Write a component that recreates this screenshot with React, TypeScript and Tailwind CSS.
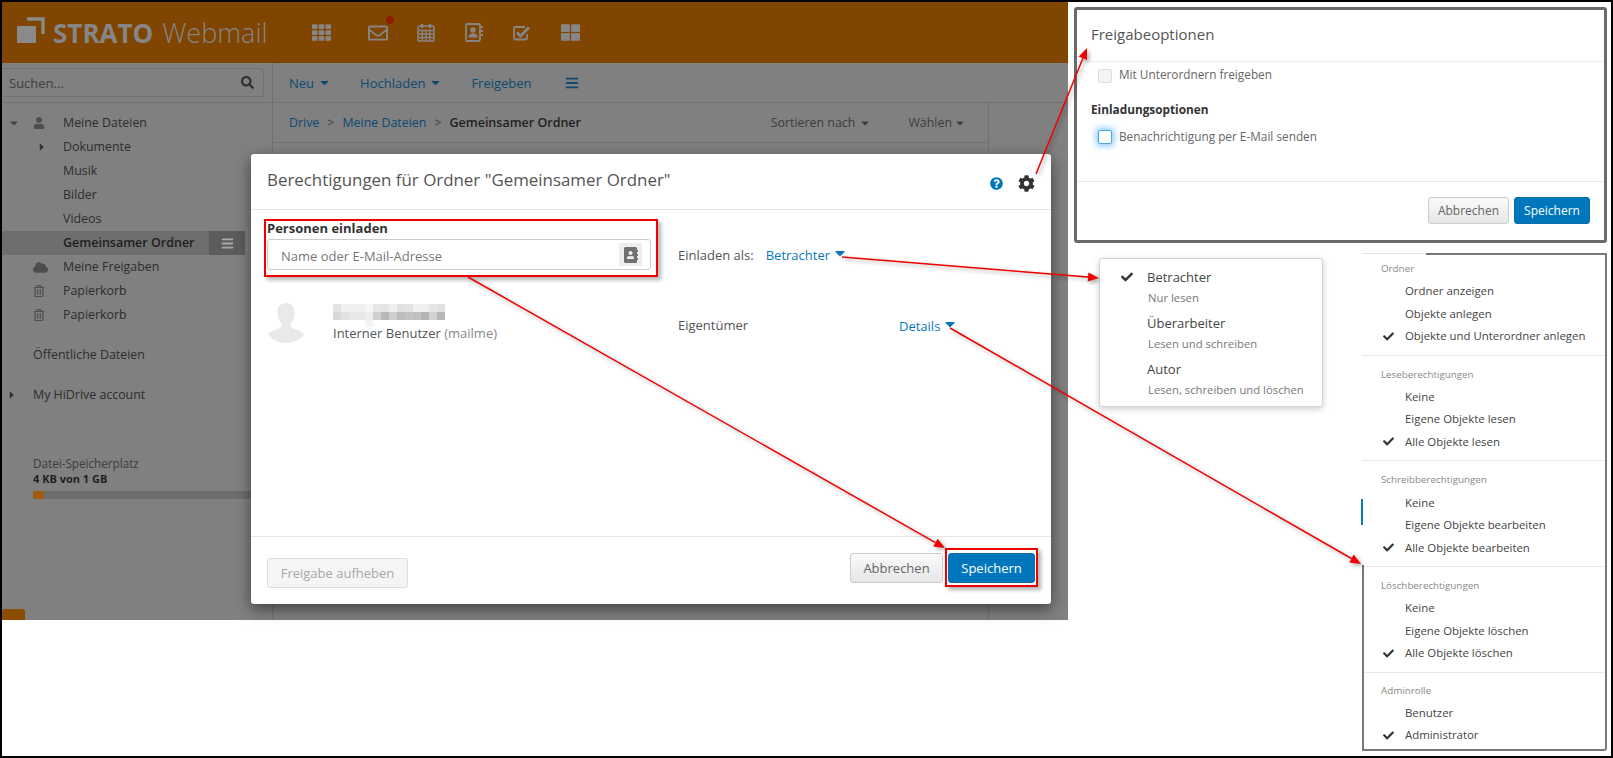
import React from "react";
import {
  FaTh, FaRegEnvelope, FaThLarge,
  FaSearch, FaBars, FaCaretDown, FaCaretRight, FaUser, FaCloud, FaRegTrashAlt, FaCog,
  FaQuestionCircle, FaCheck, FaAddressBook,
} from "react-icons/fa";

function Row({ caret, caretPad, icon, label }: { caret?: React.ReactNode; caretPad?: string; icon?: React.ReactNode; label: string }) {
  return (
    <div className="flex h-6 items-center">
      <span className={`flex w-[31px] justify-center text-[#3a3a3a] ${caretPad ?? ""}`}>{caret}</span>
      {icon !== undefined && <span className="flex w-[30px] text-[#4d4d4d]">{icon}</span>}
      <span className="text-[#2d2d2d]">{label}</span>
    </div>
  );
}

function Arrow({ x1, y1, x2, y2 }: { x1: number; y1: number; x2: number; y2: number }) {
  const a = Math.atan2(y2 - y1, x2 - x1);
  const L = 11, W = 4.5;
  const bx = x2 - L * Math.cos(a), by = y2 - L * Math.sin(a);
  const pts = `${x2},${y2} ${bx - W * Math.sin(a)},${by + W * Math.cos(a)} ${bx + W * Math.sin(a)},${by - W * Math.cos(a)}`;
  return (
    <g>
      <line x1={x1} y1={y1} x2={bx} y2={by} stroke="#f00000" strokeWidth="1.5" />
      <polygon points={pts} fill="#f00000" />
    </g>
  );
}

function Btn({ children, w, h, primary, disabled, extra }: { children: React.ReactNode; w: string; h: string; primary?: boolean; disabled?: boolean; extra?: string }) {
  const base = primary
    ? "bg-[#0077bc] border-[#0a6eab] text-white"
    : disabled
    ? "bg-[#f5f5f5] border-[#dcdcdc] text-[#a8a8a8]"
    : "bg-gradient-to-b from-[#fafafa] to-[#e6e6e6] border-[#cccccc] text-[#666666]";
  return (
    <div className={`flex items-center justify-center rounded-[3px] border text-[13px] ${w} ${h} ${base} ${extra ?? ""}`}>{children}</div>
  );
}

function MenuSection({ title, items, checked, last }: { title: string; items: string[]; checked: number; last?: boolean }) {
  return (
    <div className={last ? "" : "border-b border-[#e9e9e9] pb-[7.17px]"}>
      <div className="flex h-[22px] items-center pl-[19px] text-[9.8px] text-[#888888]">{title}</div>
      {items.map((it, i) => (
        <div key={it} className="flex h-[22.5px] items-center text-[11.4px] text-[#444444]">
          <span className="flex w-[43px] justify-end pr-[11px] text-[11px] text-[#333333]">{i === checked && <FaCheck />}</span>
          <span>{it}</span>
        </div>
      ))}
    </div>
  );
}

const mosaic = [
  ["#e4e4e4","#f0f0f0","#f0f0f0","#f1f1f1","#f6f6f6","#e6e6e6","#e4e4e4","#eeeeee","#e2e2e2","#e4e4e4","#f0f0f0","#f0f0f0","#e6e6e6","#e2e2e2"],
  ["#d9d9d9","#e2e2e2","#e8e8e8","#e8e8e8","#ededed","#d0d0d0","#b8b8b8","#cfcfcf","#bcbcbc","#c4c4c4","#c0c0c0","#b4b4b4","#d2d2d2","#b8b8b8"],
  ["#ffffff","#ffffff","#ffffff","#ffffff","#f4f4f4","#ffffff","#ffffff","#ffffff","#ffffff","#ffffff","#ffffff","#ffffff","#ffffff","#ffffff"],
];

function CalendarIcon() {
  return (
    <svg width="18" height="19" viewBox="0 0 18 19" fill="none" stroke="currentColor">
      <rect x="1" y="3" width="16" height="15" rx="1.500" strokeWidth="1.600" />
      <path d="M5 1v4M13 1v4" strokeWidth="2.400" />
      <path d="M1 7.500h16" strokeWidth="1.600" />
      <path d="M2 11h14M2 14.500h14M5.300 8v9M9 8v9M12.700 8v9" strokeWidth="1.300" />
    </svg>
  );
}

function ContactsIcon() {
  return (
    <svg width="18" height="19" viewBox="0 0 18 19" fill="none">
      <rect x="1" y="1" width="14" height="17" rx="1.500" stroke="currentColor" strokeWidth="1.800" />
      <circle cx="8" cy="7" r="2.700" fill="currentColor" />
      <path d="M3.500 14.500c0-3 2-4.300 4.500-4.300s4.500 1.300 4.500 4.300z" fill="currentColor" />
      <path d="M16 4h2M16 8h2M16 12h2" stroke="currentColor" strokeWidth="1.800" />
    </svg>
  );
}

function CheckBoxIcon() {
  return (
    <svg width="18" height="16" viewBox="0 0 18 16" fill="none" stroke="currentColor">
      <path d="M14 9v4a1.500 1.500 0 0 1-1.500 1.500h-10A1.500 1.500 0 0 1 1 13V3.500A1.500 1.500 0 0 1 2.500 2H12" strokeWidth="1.800" />
      <path d="M4 7.500l3.500 3.500 8.500-8.500" strokeWidth="2.800" />
    </svg>
  );
}

export default function App() {
  return (
    <div className="relative h-[758px] w-[1613px] overflow-hidden bg-white font-['Open_Sans',sans-serif] text-[13px] leading-[18px]">
      {/* Webmail window */}
      <div className="absolute left-[2px] top-[2px] flex h-[618px] w-[1066px] flex-col bg-[#808080]">
        <header className="flex h-[61px] shrink-0 items-center bg-[#804500] text-[#868686]">
          <div className="flex w-[295px] items-center pl-[15px]">
            <svg width="30" height="28" viewBox="0 0 30 28" className="mb-[3px]">
              <rect x="0" y="9" width="19" height="17" rx="1" fill="#8a8a8a" />
              <path d="M10 2H26V17" fill="none" stroke="#8a8a8a" strokeWidth="3.4" />
            </svg>
            <span className="ml-[6px] text-[26px] font-bold leading-none">STRATO</span>
            <span className="ml-[9px] text-[27px] font-light leading-none">Webmail</span>
          </div>
          <div className="flex w-12 justify-center text-[19px]"><FaTh /></div>
          <div className="relative ml-[9px] flex w-12 justify-center text-[20px]">
            <FaRegEnvelope />
            <span className="absolute left-[32px] top-[-7px] h-2 w-2 rounded-full bg-[#8a1f00]" />
          </div>
          <div className="flex w-12 justify-center"><CalendarIcon /></div>
          <div className="flex w-12 justify-center"><ContactsIcon /></div>
          <div className="flex w-12 justify-center"><CheckBoxIcon /></div>
          <div className="flex w-12 justify-center text-[19px]"><FaThLarge /></div>
        </header>
        <div className="flex min-h-0 flex-1">
          <aside className="relative w-[271px] shrink-0 border-r border-[#727272] text-[12.4px]">
            <div className="flex h-10 items-center border-b border-[#727272]">
              <div className="flex h-[29px] w-[262px] items-center justify-between rounded-r-[3px] border border-l-0 border-[#727272] pl-[7px] pr-[9px] text-[13px] text-[#3f3f3f]">
                <span>Suchen...</span>
                <FaSearch className="text-[13px] text-[#2e2e2e]" />
              </div>
            </div>
            <div className="pt-[8px]">
              <Row caret={<FaCaretDown className="text-[12px] text-[#444]" />} caretPad="pr-[8px]" icon={<FaUser className="text-[12px]" />} label="Meine Dateien" />
              <Row icon={<FaCaretRight className="ml-[3px] text-[12px] text-[#333]" />} label="Dokumente" />
              <Row icon={null} label="Musik" />
              <Row icon={null} label="Bilder" />
              <Row icon={null} label="Videos" />
              <div className="flex h-6 w-[243px] items-center justify-between bg-[#6e6e6e]">
                <span className="pl-[61px] text-[12.5px] font-semibold text-[#1f1f1f]">Gemeinsamer Ordner</span>
                <span className="flex h-6 w-9 items-center justify-center bg-[#5c5c5c] text-[13px] text-[#a8a8a8]"><FaBars /></span>
              </div>
              <Row icon={<FaCloud className="text-[15px]" />} label="Meine Freigaben" />
              <Row icon={<FaRegTrashAlt className="text-[12px]" />} label="Papierkorb" />
              <Row icon={<FaRegTrashAlt className="text-[12px]" />} label="Papierkorb" />
              <div className="mt-4"><Row label="Öffentliche Dateien" /></div>
              <div className="mt-4"><Row caret={<FaCaretRight className="text-[12px] text-[#333]" />} caretPad="pr-[11px]" label="My HiDrive account" /></div>
              <div className="ml-[31px] mt-[48px] text-[11.7px] leading-4 text-[#3d3d3d]">Datei-Speicherplatz</div>
              <div className="ml-[31px] text-[11px] font-bold leading-4 text-[#1f1f1f]">4 KB von 1 GB</div>
              <div className="ml-[31px] mt-[4px] h-2 bg-[#6d6d6d]"><div className="h-2 w-[11px] rounded-l-[2px] bg-[#a25a10]" /></div>
            </div>
            <div className="absolute bottom-0 left-0 h-[11px] w-[23px] rounded-t-[3px] bg-[#8a4c00]" />
          </aside>
          <div className="flex min-w-0 flex-1 flex-col">
            <div className="flex h-10 shrink-0 items-center border-b border-[#727272] pl-[16px] text-[13px] text-[#0c4a72]">
              <span>Neu</span><FaCaretDown className="ml-[4px] text-[13px]" />
              <span className="ml-[29px]">Hochladen</span><FaCaretDown className="ml-[4px] text-[13px]" />
              <span className="ml-[29px]">Freigeben</span>
              <FaBars className="ml-[33px] text-[14px]" />
            </div>
            <div className="flex min-h-0 flex-1">
              <div className="w-[716px] border-r border-[#727272]">
                <div className="flex h-10 items-center border-b border-[#727272] pl-[16px] text-[12.4px] text-[#0c4a72]">
                  <span>Drive</span>
                  <span className="mx-[8px] text-[#3d3d3d]">&gt;</span>
                  <span>Meine Dateien</span>
                  <span className="mx-[8px] text-[#3d3d3d]">&gt;</span>
                  <span className="text-[12.5px] font-semibold text-[#1f1f1f]">Gemeinsamer Ordner</span>
                  <span className="ml-auto text-[#3d3d3d]">Sortieren nach</span>
                  <FaCaretDown className="ml-[4px] text-[12px] text-[#3d3d3d]" />
                  <span className="ml-[37px] text-[#3d3d3d]">Wählen</span>
                  <FaCaretDown className="ml-[2px] mr-[22px] text-[12px] text-[#3d3d3d]" />
                </div>
              </div>
            </div>
          </div>
        </div>
      </div>

      {/* Permission dialog */}
      <div className="absolute left-[251px] top-[154px] flex h-[450px] w-[800px] flex-col rounded-[3px] bg-white shadow-[0_5px_15px_rgba(0,0,0,0.5)]">
        <div className="flex h-[56px] shrink-0 items-center border-b border-[#e5e5e5] pl-[16px] pr-[16px]">
          <span className="mb-[3px] text-[16.9px] text-[#555555]">Berechtigungen für Ordner "Gemeinsamer Ordner"</span>
          <FaQuestionCircle className="ml-auto mt-[3px] text-[13px] text-[#0077bc]" />
          <FaCog className="ml-[15px] mt-[3px] text-[17px] text-[#333333]" />
        </div>
        <div className="flex min-h-0 flex-1 flex-col px-[16px] pt-[9px]">
          <div className="flex items-end">
            <div className="w-[384px]">
              <div className="font-bold text-[#333333]">Personen einladen</div>
              <div className="mt-[2px] flex h-[31px] items-center justify-between rounded-[3px] border border-[#cccccc] pl-[13px] pr-[8px] text-[13px] text-[#777777]">
                <span className="mt-[2px]">Name oder E-Mail-Adresse</span>
                <span className="flex h-[23px] w-[23px] items-center justify-center bg-[#eeeeee] text-[16px] text-[#707070]"><FaAddressBook /></span>
              </div>
            </div>
            <div className="ml-[27px] flex h-[31px] items-center text-[#555555]">
              <span>Einladen als:</span>
              <span className="ml-[12px] text-[#0a78b8]">Betrachter</span>
              <FaCaretDown className="mb-[3px] ml-[2px] text-[16px] text-[#0a78b8]" />
            </div>
          </div>
          <div className="mt-[33px] flex h-[40px] items-start">
            <svg width="36" height="40" viewBox="0 0 36 40" className="ml-[1px] shrink-0">
              <path d="M18 0c5 0 8.500 3.500 8.500 9 0 5-1.500 9-4 12v3c3 2 10 3.500 13.500 7-3 5.500-10 9-18 9s-15-3.500-18-9c3.500-3.500 10.500-5 13.500-7v-3c-2.500-3-4-7-4-12 0-5.500 3.500-9 8.500-9z" fill="#e9e9e9" />
            </svg>
            <div className="ml-[29px] w-[345px] shrink-0">
              <svg width="112" height="24" viewBox="0 0 112 24" className="block">
                {mosaic.map((r, y) => r.map((c, x) => <rect key={`${x}-${y}`} x={x * 8} y={y * 8 + 1} width="8" height="8" fill={c} />))}
              </svg>
              <div className="mt-[-3px] text-[#555555]">Interner Benutzer <span className="text-[#888888]">(mailme)</span></div>
            </div>
            <span className="mt-[13px] w-[221px] shrink-0 text-[#555555]">Eigentümer</span>
            <span className="mt-[13px] flex items-center text-[#0a78b8]">Details<FaCaretDown className="mb-[3px] ml-[2px] text-[16px]" /></span>
          </div>
        </div>
        <div className="flex h-[68px] shrink-0 justify-between border-t border-[#e5e5e5] px-[16px]">
          <Btn w="w-[141px]" h="h-[30px]" disabled extra="mt-[21px]">Freigabe aufheben</Btn>
          <div className="mt-[16px] flex gap-[5px]">
            <Btn w="w-[93px]" h="h-[30px]">Abbrechen</Btn>
            <Btn w="w-[87px]" h="h-[30px]" primary>Speichern</Btn>
          </div>
        </div>
      </div>

      {/* Share options dialog */}
      <div className="absolute left-[1074px] top-[7px] flex h-[236px] w-[533px] flex-col rounded-[3px] border-[3px] border-[#6a6a6a] bg-white text-[11.8px] text-[#666666]">
        <div className="flex h-[52px] shrink-0 items-center border-b border-[#eeeeee] pb-[4px] pl-[14px] text-[15px] text-[#555555]">Freigabeoptionen</div>
        <div className="flex-1 pl-[14px]">
          <div className="ml-[7px] mt-[6px] flex h-4 items-center">
            <span className="h-[14px] w-[14px] rounded-[2px] border border-[#dddddd] bg-[#f4f4f4]" />
            <span className="mb-[4px] ml-[7px]">Mit Unterordnern freigeben</span>
          </div>
          <div className="mt-[16px] font-bold text-[#333333]">Einladungsoptionen</div>
          <div className="ml-[7px] mt-[11px] flex h-4 items-center">
            <span className="h-[14px] w-[14px] rounded-[2px] border border-[#4aa8e0] bg-white shadow-[0_0_6px_2px_rgba(60,170,250,0.6)]" />
            <span className="mb-[2px] ml-[7px]">Benachrichtigung per E-Mail senden</span>
          </div>
        </div>
        <div className="flex h-[59px] shrink-0 justify-end gap-[5px] border-t border-[#e8e8e8] pr-[14px] pt-[15px]">
          <Btn w="w-[81px]" h="h-[27px]" extra="!text-[12px]">Abbrechen</Btn>
          <Btn w="w-[76px]" h="h-[27px]" primary extra="!text-[12px]">Speichern</Btn>
        </div>
      </div>

      {/* Invite-as menu */}
      <div className="absolute left-[1099px] top-[258px] h-[149px] w-[224px] rounded-[3px] border border-[#d4d4d4] bg-white pt-[8px] shadow-[0_2px_6px_rgba(0,0,0,0.2)]">
        {[
          ["Betrachter", "Nur lesen"],
          ["Überarbeiter", "Lesen und schreiben"],
          ["Autor", "Lesen, schreiben und löschen"],
        ].map(([t, s], i) => (
          <div key={t} className="h-[46px]">
            <div className="flex h-5 items-center text-[13px] text-[#444444]">
              <span className="flex w-[47px] justify-end pr-[14px] text-[12px] text-[#333333]">{i === 0 && <FaCheck />}</span>
              {t}
            </div>
            <div className="flex h-[22px] items-center pl-[48px] text-[11.3px] text-[#777777]">{s}</div>
          </div>
        ))}
      </div>

      {/* Details menu */}
      <div className="absolute left-[1362px] top-[253px] h-[498px] w-[245px] rounded-br-[3px] border-b-2 border-r-2 border-[#777777] bg-white">
        <div className="absolute left-[64px] right-[-2px] top-0 h-[2px] bg-[#777777]" />
        <div className="absolute left-0 top-0 h-px w-[64px] bg-[#e4e4e4]" />
        <div className="absolute bottom-[-2px] left-0 top-[312px] w-[2px] bg-[#777777]" />
        <div className="absolute left-[-1px] top-[246px] h-[26px] w-[2px] bg-[#0a78b8]" />
        <div className="pt-[5px]">
          <MenuSection title="Ordner" items={["Ordner anzeigen", "Objekte anlegen", "Objekte und Unterordner anlegen"]} checked={2} />
          <div className="pt-[8px]"><MenuSection title="Leseberechtigungen" items={["Keine", "Eigene Objekte lesen", "Alle Objekte lesen"]} checked={2} /></div>
          <div className="pt-[8px]"><MenuSection title="Schreibberechtigungen" items={["Keine", "Eigene Objekte bearbeiten", "Alle Objekte bearbeiten"]} checked={2} /></div>
          <div className="pt-[8px]"><MenuSection title="Löschberechtigungen" items={["Keine", "Eigene Objekte löschen", "Alle Objekte löschen"]} checked={2} /></div>
          <div className="pt-[7px]"><MenuSection title="Adminrolle" items={["Benutzer", "Administrator"]} checked={1} last /></div>
        </div>
      </div>

      {/* Annotations */}
      <div className="absolute left-[264px] top-[219px] h-[58px] w-[394px] border-2 border-[#f00000] shadow-[3px_3px_4px_rgba(0,0,0,0.3)]" />
      <div className="absolute left-[945px] top-[548px] h-[39px] w-[93px] border-2 border-[#f00000] shadow-[3px_3px_4px_rgba(0,0,0,0.3)]" />
      <svg width="1613" height="758" viewBox="0 0 1613 758" className="pointer-events-none absolute left-0 top-0 drop-shadow-[2px_2px_2px_rgba(0,0,0,0.35)]">
        <Arrow x1={1036} y1={174} x2={1087} y2={48} />
        <Arrow x1={842} y1={257} x2={1099} y2={278} />
        <Arrow x1={468} y1={277} x2={945} y2={548} />
        <Arrow x1={950} y1={328} x2={1361} y2={564} />
      </svg>

      {/* Screenshot frame */}
      <div className="pointer-events-none absolute inset-0 border-2 border-black" />
    </div>
  );
}
